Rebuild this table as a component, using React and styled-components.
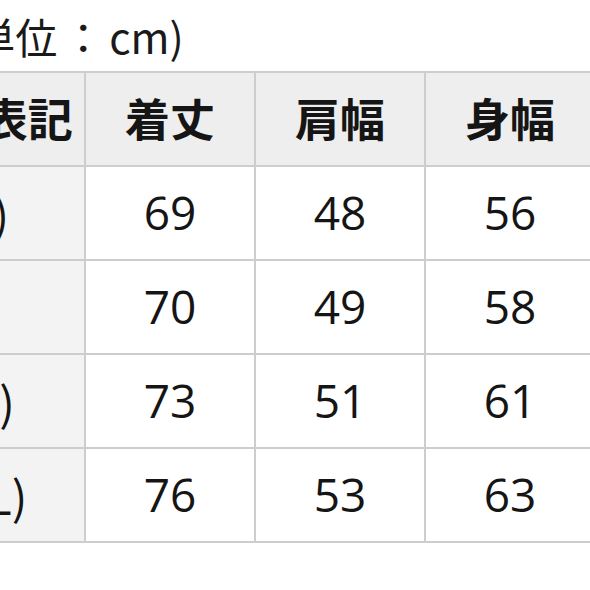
import styled, { createGlobalStyle } from "styled-components";

const GlobalStyle = createGlobalStyle`
    html, body {
        margin: 0;
        padding: 0;
        background: #ffffff;
    }
    body {
        font-family: "Noto Sans CJK JP", "Noto Sans", sans-serif;
        color: #111111;
    }
`

const Page = styled.div`
    width: 590px;
    height: 590px;
    overflow: hidden;
    background: #ffffff;
`

const Caption = styled.p`
    margin: 0 0 14px -41px;
    padding-top: 15px;
    font-size: 42px;
    line-height: 42px;
    white-space: nowrap;
    color: #1a1a1a;
    text-spacing-trim: space-all;
`

const Colon = styled.span`
    display: inline-block;
    width: 52px;
    text-align: center;
`

const SizeTable = styled.div`
    display: grid;
    grid-template-columns: 246px 168px 168px 168px;
    grid-auto-rows: 92px;
    gap: 2px;
    padding: 2px;
    margin-left: -164px;
    width: max-content;
    background: #cdcdcd;
`

const Cell = styled.div`
    display: flex;
    align-items: center;
    justify-content: center;
    white-space: nowrap;
    line-height: 1;
    background: ${({ head, side }) => head ? '#eeeeee' : side ? '#f3f3f3' : '#ffffff'};
    font-size: ${({ head }) => head ? '45px' : '46px'};
    font-weight: ${({ head }) => head ? 700 : 400};
    font-family: ${({ num }) => num ? '"Open Sans", "Noto Sans", sans-serif' : 'inherit'};
    padding-bottom: ${({ head, num }) => head ? '3px' : num ? '2px' : '0'};
    color: #151515;
`

const headers = ['サイズ表記', '着丈', '肩幅', '身幅'];

const rows = [
    { size: 'S(M)', values: [69, 48, 56] },
    { size: 'M', values: [70, 49, 58] },
    { size: 'L(XL)', values: [73, 51, 61] },
    { size: 'LL(XL)', values: [76, 53, 63] },
];

const App = () => {
    return <>
        <GlobalStyle />
        <Page>
            <Caption>(単位<Colon>：</Colon>cm)</Caption>
            <SizeTable>
                {headers.map(label => <Cell head key={label}>{label}</Cell>)}
                {rows.map(row => <>
                    <Cell side key={row.size}>{row.size}</Cell>
                    {row.values.map((value, i) => <Cell num key={row.size + i}>{value}</Cell>)}
                </>)}
            </SizeTable>
        </Page>
    </>
}

export default App;
